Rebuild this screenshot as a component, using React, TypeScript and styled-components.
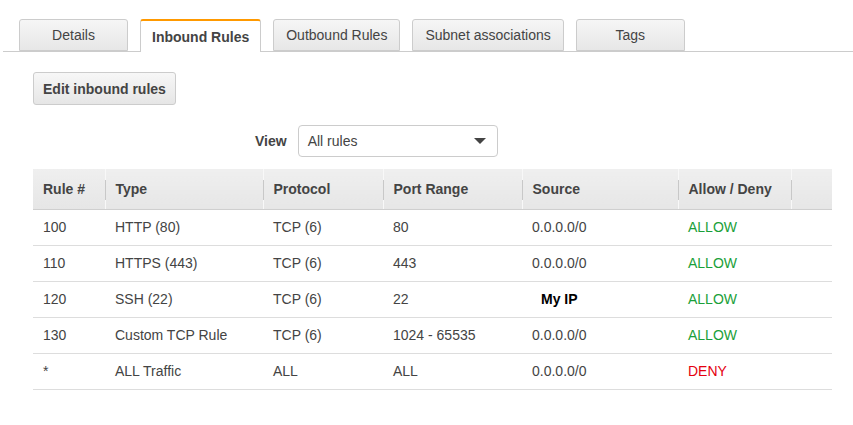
import React from 'react'
import styled, { createGlobalStyle } from 'styled-components'

const GlobalStyle = createGlobalStyle`
  html, body {
    margin: 0;
    padding: 0;
    background: #fff;
  }
  body {
    font-family: "Liberation Sans", Arial, Helvetica, sans-serif;
    font-size: 14px;
    color: #444;
  }
`

interface Rule {
  num: string,
  type: string,
  protocol: string,
  range: string,
  source: string,
  action: 'ALLOW' | 'DENY',
  special?: boolean
}

const rules: Rule[] = [
  { num: '100', type: 'HTTP (80)', protocol: 'TCP (6)', range: '80', source: '0.0.0.0/0', action: 'ALLOW' },
  { num: '110', type: 'HTTPS (443)', protocol: 'TCP (6)', range: '443', source: '0.0.0.0/0', action: 'ALLOW' },
  { num: '120', type: 'SSH (22)', protocol: 'TCP (6)', range: '22', source: 'My IP', action: 'ALLOW', special: true },
  { num: '130', type: 'Custom TCP Rule', protocol: 'TCP (6)', range: '1024 - 65535', source: '0.0.0.0/0', action: 'ALLOW' },
  { num: '*', type: 'ALL Traffic', protocol: 'ALL', range: 'ALL', source: '0.0.0.0/0', action: 'DENY' },
]

const columns = [
  { label: 'Rule #', width: 72 },
  { label: 'Type', width: 158 },
  { label: 'Protocol', width: 120 },
  { label: 'Port Range', width: 139 },
  { label: 'Source', width: 156 },
  { label: 'Allow / Deny', width: 113 },
  { label: '', width: 41 },
]

const Page = styled.div`
  padding-top: 18px;
`

const TabBar = styled.div`
  display: flex;
  align-items: flex-end;
  gap: 12px;
  margin-left: 3px;
  padding-left: 16px;
  border-bottom: 1px solid #ccc;
  height: 33px;
`

const Tab = styled.div<{ active?: boolean }>`
  box-sizing: border-box;
  min-width: 109px;
  height: ${props => props.active ? 33 : 32}px;
  margin-bottom: ${props => props.active ? -1 : 0}px;
  padding: 0 ${props => props.active ? 11 : 12}px;
  display: flex;
  align-items: center;
  justify-content: center;
  border: 1px solid #ccc;
  border-bottom: ${props => props.active ? 'none' : '1px solid #ccc'};
  border-top: ${props => props.active ? '2px solid #f90' : '1px solid #ccc'};
  border-radius: 3px 3px 0 0;
  background: ${props => props.active ? '#fff' : 'linear-gradient(#f6f6f6, #e7e7e7)'};
  font-weight: ${props => props.active ? 'bold' : 'normal'};
  color: #444;
  white-space: nowrap;
`

const Content = styled.div`
  padding: 20px 21px 0 33px;
`

const Button = styled.button`
  box-sizing: border-box;
  height: 33px;
  padding: 0 9px;
  font-family: inherit;
  font-size: 14px;
  font-weight: bold;
  color: #444;
  background: linear-gradient(#f7f7f7, #e6e6e6);
  border: 1px solid #ccc;
  border-radius: 3px;
`

const ViewRow = styled.div`
  display: flex;
  align-items: center;
  gap: 11px;
  margin: 20px 0 0 222px;
`

const ViewLabel = styled.span`
  font-weight: bold;
  color: #444;
`

const Select = styled.div`
  box-sizing: border-box;
  width: 200px;
  height: 32px;
  padding: 0 11px 0 9px;
  display: flex;
  align-items: center;
  justify-content: space-between;
  border: 1px solid #ccc;
  border-radius: 4px;
  color: #444;
`

const Caret = styled.span`
  width: 0;
  height: 0;
  border-left: 6px solid transparent;
  border-right: 6px solid transparent;
  border-top: 6px solid #444;
`

const Table = styled.table`
  margin-top: 12px;
  width: 799px;
  border-collapse: collapse;
  table-layout: fixed;
`

const HeadCell = styled.th<{ first?: boolean }>`
  position: relative;
  height: 40px;
  padding: 0 10px;
  text-align: left;
  font-weight: bold;
  color: #444;
  background: linear-gradient(#efefef, #e6e6e6);
  border-bottom: 1px solid #cfcfcf;
  border-left: ${props => props.first ? 'none' : '1px solid #f8f8f8'};

  &::before {
    content: '';
    display: ${props => props.first ? 'none' : 'block'};
    position: absolute;
    left: -1px;
    top: 11px;
    height: 20px;
    width: 1px;
    background: #c8c8c8;
  }
`

const Cell = styled.td<{ strong?: boolean, indent?: boolean }>`
  box-sizing: border-box;
  height: 36px;
  padding: 0 10px 2px ${props => props.indent ? 19 : 10}px;
  border-bottom: 1px solid #ddd;
  color: ${props => props.strong ? '#000' : '#444'};
  font-weight: ${props => props.strong ? 'bold' : 'normal'};
  white-space: nowrap;
`

const Action = styled.span<{ deny?: boolean }>`
  color: ${props => props.deny ? '#e5000f' : '#1aa039'};
`

function App () {
  const tabs = ['Details', 'Inbound Rules', 'Outbound Rules', 'Subnet associations', 'Tags']
  return (
    <Page>
      <GlobalStyle />
      <TabBar>
        {tabs.map(t => <Tab key={t} active={t === 'Inbound Rules'}>{t}</Tab>)}
      </TabBar>
      <Content>
        <Button>Edit inbound rules</Button>
        <ViewRow>
          <ViewLabel>View</ViewLabel>
          <Select>
            <span>All rules</span>
            <Caret />
          </Select>
        </ViewRow>
        <Table>
          <colgroup>
            {columns.map((c, i) => <col key={i} style={{ width: c.width }} />)}
          </colgroup>
          <thead>
            <tr>
              {columns.map((c, i) => <HeadCell key={i} first={i === 0}>{c.label}</HeadCell>)}
            </tr>
          </thead>
          <tbody>
            {rules.map(r => (
              <tr key={r.num}>
                <Cell>{r.num}</Cell>
                <Cell>{r.type}</Cell>
                <Cell>{r.protocol}</Cell>
                <Cell>{r.range}</Cell>
                <Cell strong={r.special} indent={r.special}>{r.source}</Cell>
                <Cell><Action deny={r.action === 'DENY'}>{r.action}</Action></Cell>
                <Cell />
              </tr>
            ))}
          </tbody>
        </Table>
      </Content>
    </Page>
  )
}

export default App
